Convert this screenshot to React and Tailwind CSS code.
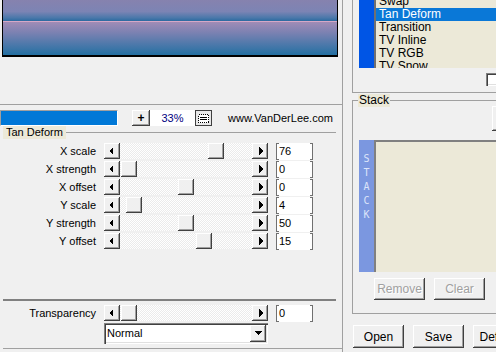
import React from "react";

const raised =
  "bg-[#f0f0f0] shadow-[inset_-1px_-1px_#404040,inset_1px_1px_#ffffff,inset_-2px_-2px_#a0a0a0]";
const sunken =
  "shadow-[inset_1px_1px_#808080,inset_2px_2px_#404040,inset_-1px_-1px_#ffffff,inset_-2px_-2px_#e0e0e0]";

const params = [
  { label: "X scale", value: "76", pos: 88 },
  { label: "X strength", value: "0", pos: 1 },
  { label: "X offset", value: "0", pos: 58 },
  { label: "Y scale", value: "4", pos: 6 },
  { label: "Y strength", value: "50", pos: 58 },
  { label: "Y offset", value: "15", pos: 76 },
];

const effects = ["Swap", "Tan Deform", "Transition", "TV Inline", "TV RGB", "TV Snow"];

function Arrow({ dir }) {
  const pts = {
    left: "9,4 5,8 9,12",
    right: "7,4 11,8 7,12",
    down: "4,6 12,6 8,10",
  }[dir];
  return (
    <svg width="16" height="16" viewBox="0 0 16 16" shapeRendering="crispEdges">
      <polygon points={pts} fill="#000" />
    </svg>
  );
}

function ScrollBar({ pos }) {
  return (
    <div className="flex w-[164px] h-[16px]">
      <div className={`w-[16px] h-[16px] ${raised}`}>
        <Arrow dir="left" />
      </div>
      <div className="relative flex-1 h-[16px] bg-[repeating-conic-gradient(#ffffff_0_25%,#ebebeb_0_50%)] bg-[length:2px_2px]">
        <div className={`absolute top-0 w-[16px] h-[16px] ${raised}`} style={{ left: pos }} />
      </div>
      <div className={`w-[16px] h-[16px] ${raised}`}>
        <Arrow dir="right" />
      </div>
    </div>
  );
}

function EditBox({ value }) {
  return (
    <div className="relative w-[37px] h-[17px] bg-white border border-[#707070]">
      <div className="absolute left-[2px] right-[2px] -top-px -bottom-px bg-white" />
      <span className="relative block pl-[2px] leading-[15px]">{value}</span>
    </div>
  );
}

function Row({ label, value, pos }) {
  return (
    <div className="flex items-center h-[16px]">
      <div className="w-[97px] text-right pr-[1px]">{label}</div>
      <div className="ml-[7px]">
        <ScrollBar pos={pos} />
      </div>
      <div className="ml-[8px]">
        <EditBox value={value} />
      </div>
    </div>
  );
}

export default function App() {
  return (
    <div className="w-[496px] h-[352px] overflow-hidden bg-[#f0f0f0] flex font-['Liberation_Sans',Arial,sans-serif] text-[11px] text-black leading-none">
      {/* Left side: preview + parameters */}
      <div className="w-[343px] shrink-0 border-r border-[#a0a0a0] flex flex-col">
        <div className="h-[105px] shrink-0 border-b border-[#a0a0a0] pl-[2px]">
          <div className="w-[336px] h-[57px] border-x border-b-2 border-black flex flex-col">
            <div className="h-[21px] bg-[linear-gradient(#8682ae,#7c84b4_55%,#4a78aa_85%,#2c6aa0)]" />
            <div className="h-px bg-[#d6a8c6]" />
            <div className="flex-1 bg-[linear-gradient(#a08cb6,#7e82b2_30%,#4a78aa_70%,#2470a2)]" />
          </div>
        </div>

        {/* progress / zoom bar */}
        <div className="mt-[5px] h-[16px] flex items-center shrink-0">
          <div className="w-[118px] h-[16px] border border-t-[#a0a0a0] border-l-[#a0a0a0] border-b-white border-r-white">
            <div className="w-full h-full bg-[#0078d7]" />
          </div>
          <div className={`ml-[14px] w-[18px] h-[16px] flex items-center justify-center font-bold text-[12px] ${raised}`}>
            +
          </div>
          <div className="w-[45px] h-[16px] bg-white text-[#000080] text-center leading-[16px]">33%</div>
          <div className="w-[17px] h-[16px] bg-[#e8e8e8] border border-[#404040] flex items-center justify-center">
            <svg width="11" height="9" viewBox="0 0 11 9" shapeRendering="crispEdges">
              <rect x="0.5" y="0.5" width="10" height="8" fill="#fff" stroke="#000" strokeDasharray="1 1" />
              <line x1="2" y1="3.5" x2="9" y2="3.5" stroke="#000" />
              <line x1="2" y1="5.5" x2="9" y2="5.5" stroke="#000" />
            </svg>
          </div>
          <div className="ml-[16px]">www.VanDerLee.com</div>
        </div>

        {/* Tan Deform group */}
        <div className="h-[13px] flex items-center shrink-0">
          <span className="ml-[3px] px-[3px] h-[13px] leading-[13px] bg-[#ece9d8]">Tan Deform</span>
          <div className="flex-1 h-px bg-[#a0a0a0] mr-[6px]" />
        </div>
        <div className="mt-[4px] flex flex-col gap-[2px]">
          {params.map((p) => (
            <Row key={p.label} {...p} />
          ))}
        </div>

        <div className="mt-[50px] ml-[3px] mr-[6px] h-[2px] bg-[#808080] shrink-0" />
        <div className="mt-[4px]">
          <Row label="Transparency" value="0" pos={1} />
        </div>
        <div className={`mt-[2px] ml-[104px] w-[164px] h-[21px] bg-white flex items-center ${sunken}`}>
          <span className="pl-[3px] flex-1">Normal</span>
          <div className={`mr-[2px] w-[16px] h-[17px] ${raised}`}>
            <Arrow dir="down" />
          </div>
        </div>
        <div className="mt-[4px] ml-[3px] h-px bg-[#a0a0a0]" />
      </div>

      {/* Right side: effects list + stack */}
      <div className="flex-1 min-w-0 flex flex-col pl-[9px]">
        <div className="w-[200px] h-[93px] shrink-0 border-l border-b border-[#a0a0a0] pl-[6px] flex flex-col">
          <div className="h-[68px] flex overflow-hidden">
            <div className="w-[15px] bg-[#0055e5]" />
            <div className="w-[2px] bg-[#707070]" />
            <div className="flex-1 bg-[#ece9d8]">
              <div className="-mt-[5px]">
                {effects.map((e) => (
                  <div
                    key={e}
                    className={`h-[13px] leading-[13px] pl-[3px] text-[12px] ${
                      e === "Tan Deform" ? "bg-[#0a78d7] text-white" : ""
                    }`}
                  >
                    {e}
                  </div>
                ))}
              </div>
            </div>
          </div>
          <div className={`mt-[5px] ml-[127px] w-[13px] h-[13px] bg-white ${sunken}`} />
        </div>

        <div className="relative mt-[7px] w-[200px] h-[214px] shrink-0 border-t border-l border-b border-[#a0a0a0] pt-[5px]">
          <span className="absolute -top-[7px] left-[5px] px-[1px] h-[13px] leading-[13px] text-[12px] bg-[#ece9d8]">
            Stack
          </span>
          <div className="h-[25px] pl-[139px]">
            <div className={`w-[60px] h-[25px] ${raised}`} />
          </div>
          <div className="mt-[9px] ml-[6px] h-[132px] flex">
            <div className="w-[15px] bg-[#7b97e0] flex flex-col items-center pt-[12px] text-[#dce4fa] font-['DejaVu_Sans_Mono',monospace] text-[10px]">
              {"STACK".split("").map((c, i) => (
                <span key={i} className="h-[14px] leading-[14px]">
                  {c}
                </span>
              ))}
            </div>
            <div className="flex-1 bg-[#ece9d8] border-t-2 border-l-2 border-[#808080]" />
          </div>
          <div className="mt-[6px] pl-[21px] flex gap-[9px]">
            {["Remove", "Clear"].map((b) => (
              <div
                key={b}
                className={`w-[51px] h-[22px] flex items-center justify-center text-[12px] text-[#a0a0a0] [text-shadow:1px_1px_0_#ffffff] ${raised}`}
              >
                {b}
              </div>
            ))}
          </div>
        </div>

        <div className="mt-[11px] ml-[1px] flex gap-[9px] shrink-0">
          {["Open", "Save", "Default"].map((b) => (
            <div key={b} className={`w-[51px] h-[23px] shrink-0 flex items-center justify-center text-[12px] ${raised}`}>
              {b}
            </div>
          ))}
        </div>
      </div>
    </div>
  );
}
